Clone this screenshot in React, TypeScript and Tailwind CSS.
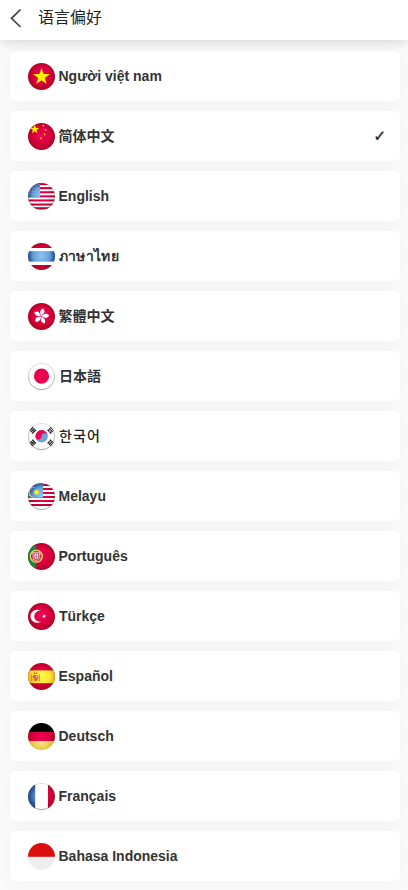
import type { ReactNode } from "react";

const STAR = "0,-10 2.35,-3.24 9.51,-3.09 3.8,1.24 5.88,8.09 0,4 -5.88,8.09 -3.8,1.24 -9.51,-3.09 -2.35,-3.24";

function Star({ x, y, s, fill = "#ffe100", r = 0 }: { x: number; y: number; s: number; fill?: string; r?: number }) {
  return <polygon points={STAR} fill={fill} transform={`translate(${x} ${y}) rotate(${r}) scale(${s / 10})`} />;
}

function Red() {
  return <rect width="27" height="27" fill="url(#red)" />;
}

function Stripes({ ys, h }: { ys: number[]; h: number }) {
  return (
    <>
      <rect width="27" height="27" fill="#fff" />
      {ys.map((y) => (
        <rect key={y} y={y} width="27" height={h} fill="url(#red)" />
      ))}
    </>
  );
}

const petals = [0, 72, 144, 216, 288];

const flags: Record<string, ReactNode> = {
  vn: (
    <>
      <Red />
      <Star x={13.5} y={13.8} s={8.9} fill="#fff000" />
    </>
  ),
  cn: (
    <>
      <Red />
      <Star x={6.7} y={6.4} s={4.8} fill="#fff000" />
      <Star x={15.4} y={2.7} s={1.4} r={20} />
      <Star x={17.7} y={6.9} s={1.4} />
      <Star x={16.6} y={11.4} s={1.4} r={20} />
      <Star x={12.9} y={15.3} s={1.6} />
    </>
  ),
  us: (
    <>
      <Stripes ys={[0, 4.1, 8.2, 12.3, 16.4, 20.5, 24.2]} h={2.1} />
      <rect width="12" height="14.2" fill="url(#blue)" />
      {[2, 5, 8, 11].map((y) =>
        [2, 5, 8, 11].map((x) => <circle key={`${x}-${y}`} cx={x - (y % 2)} cy={y} r=".65" fill="#d1e0f3" opacity=".55" />),
      )}
    </>
  ),
  th: (
    <>
      <rect width="27" height="27" fill="#fff" />
      <rect width="27" height="5" fill="url(#red)" />
      <rect y="8.2" width="27" height="10.4" fill="url(#blue)" />
      <rect y="22" width="27" height="5" fill="url(#red)" />
    </>
  ),
  hk: (
    <>
      <Red />
      <g transform="translate(13.3 13.2) rotate(12)">
        {petals.map((r) => (
          <path
            key={r}
            transform={`rotate(${r})`}
            d="M0 -.3C-2.4 -2.6 -2.9 -6.6 .6 -8.2C.2 -6.8 2.5 -6.2 2.3 -4.6C2.1 -3 .6 -2.4 0 -.3Z"
            fill="#fff"
          />
        ))}
      </g>
    </>
  ),
  jp: (
    <>
      <rect width="27" height="27" fill="#fff" />
      <circle cx="13.5" cy="13.2" r="7.6" fill="#ec0050" />
    </>
  ),
  kr: (
    <>
      <rect width="27" height="27" fill="#fff" />
      <g transform="translate(13.6 13.3)">
        <circle r="6.2" fill="#6aa3dc" />
        <path d="M-6.2 0A6.2 6.2 0 0 1 6.2 0A3.1 3.1 0 0 0 0 0A3.1 3.1 0 0 1 -6.2 0Z" fill="#f00057" />
      </g>
      {[
        [4.7, 7.3, -45],
        [22.8, 7.3, 45],
        [4.7, 20, 45],
        [22.8, 20, -45],
      ].map(([x, y, r]) => (
        <g key={`${x}-${y}`} transform={`translate(${x} ${y}) rotate(${r})`} stroke="#202020" strokeWidth="1.35">
          <path d="M-2.6 -1.9H2.6M-2.6 0H2.6M-2.6 1.9H2.6" />
          <path d="M0 -2.5V2.5" stroke={x > 20 ? "#fff" : "#202020"} strokeWidth=".5" />
        </g>
      ))}
    </>
  ),
  my: (
    <>
      <Stripes ys={[1, 5, 9, 13, 17, 21]} h={2} />
      <rect width="15" height="14.8" fill="url(#blue)" />
      <path d="M7.4 4.4A5.3 5.3 0 1 0 7.4 14.2A4.95 4.95 0 1 1 7.4 4.4Z" fill="#d9d640" />
      <circle cx="8.6" cy="9.2" r="2.2" fill="#fff02b" />
      <circle cx="8.6" cy="9.2" r="2.5" fill="none" stroke="#e8e238" strokeWidth=".8" strokeDasharray=".7 .6" />
    </>
  ),
  pt: (
    <>
      <Red />
      <rect width="8.2" height="27" fill="#168440" />
      <circle cx="8.3" cy="13.2" r="6" fill="#cc2638" stroke="#ded463" strokeWidth="1.3" />
      <path d="M3 10Q9 10 13.5 16M3.5 17Q9 17 13 10" stroke="#ded463" strokeWidth=".8" fill="none" />
      <path d="M5 9.4H11.6V14Q11.6 17 8.3 18Q5 17 5 14Z" fill="#e3425a" stroke="#f3dfd9" strokeWidth=".7" />
      <path d="M6.5 10.8H10.1V14Q10 15.5 8.3 16Q6.5 15.5 6.5 14Z" fill="#fff" />
      <path d="M8.3 11.2V15.5M6.9 13.2H9.8" stroke="#526eac" strokeWidth=".8" />
    </>
  ),
  tr: (
    <>
      <Red />
      <path d="M13.3 8.2A6.6 6.6 0 1 0 13.3 18.3A5.35 5.35 0 1 1 13.3 8.2Z" fill="#fff" />
      <Star x={16.1} y={13.2} s={2.3} fill="#fff" r={-18} />
    </>
  ),
  es: (
    <>
      <Red />
      <rect y="7.4" width="27" height="12.8" fill="url(#yellow)" />
      <path d="M3.6 11.5V18M11.3 11.5V18" stroke="#bc8b65" strokeWidth="1.1" />
      <path d="M2.5 14H12.4M2.7 17.7H4.7M10.3 17.7H12.3" stroke="#e37c48" strokeWidth=".7" />
      <path d="M5.3 12H9.8V15.8Q9.7 17.8 7.5 18.2Q5.4 17.8 5.3 15.8Z" fill="#d94b4e" />
      <path d="M5.5 10.8L6 9.3L7.5 10L9 9.3L9.6 10.8Z" fill="#d95643" />
      <rect x="7.7" y="12.5" width="1.7" height="2" fill="#e6d2cf" />
      <rect x="5.7" y="15" width="1.7" height="1.6" fill="#edb351" />
    </>
  ),
  de: (
    <>
      <rect width="27" height="9.2" fill="#000" />
      <rect y="9" width="27" height="9.1" fill="url(#red)" />
      <rect y="18" width="27" height="9" fill="url(#gold)" />
    </>
  ),
  fr: (
    <>
      <rect width="27" height="27" fill="#fff" />
      <rect width="7.2" height="27" fill="url(#navy)" />
      <rect x="20" width="7" height="27" fill="url(#red)" />
    </>
  ),
  id: (
    <>
      <rect width="28" height="14" fill="#dc0f0f" />
      <rect y="13.8" width="28" height="13.2" fill="#eee" />
    </>
  ),
};

const paleRims = ["jp", "kr", "my", "fr", "us"];

function FlagDefs() {
  return (
    <svg className="absolute size-0" aria-hidden="true">
      <defs>
        <radialGradient id="red" gradientUnits="userSpaceOnUse" cx="13.5" cy="12.5" r="14.5">
          <stop offset="0" stopColor="#f2005a" />
          <stop offset=".5" stopColor="#df0043" />
          <stop offset="1" stopColor="#ad0020" />
        </radialGradient>
        <radialGradient id="blue" gradientUnits="userSpaceOnUse" cx="13.5" cy="13" r="14">
          <stop offset="0" stopColor="#8cc8f0" />
          <stop offset=".6" stopColor="#659fd5" />
          <stop offset="1" stopColor="#183e8b" />
        </radialGradient>
        <radialGradient id="navy" gradientUnits="userSpaceOnUse" cx="13.5" cy="13" r="14">
          <stop offset="0" stopColor="#689bd1" />
          <stop offset=".5" stopColor="#5487c4" />
          <stop offset="1" stopColor="#17377f" />
        </radialGradient>
        <radialGradient id="yellow" gradientUnits="userSpaceOnUse" cx="13.5" cy="13" r="14">
          <stop offset="0" stopColor="#fff84a" />
          <stop offset=".6" stopColor="#fce632" />
          <stop offset="1" stopColor="#e2aa1f" />
        </radialGradient>
        <radialGradient id="gold" gradientUnits="userSpaceOnUse" cx="13.5" cy="17" r="13">
          <stop offset="0" stopColor="#fbe99a" />
          <stop offset=".65" stopColor="#edcf50" />
          <stop offset="1" stopColor="#d7a928" />
        </radialGradient>
        <linearGradient id="rim" x2="0" y2="1">
          <stop offset="0" stopColor="#777" stopOpacity=".25" />
          <stop offset="1" stopColor="#555" stopOpacity=".6" />
        </linearGradient>
        <clipPath id="disc">
          <circle cx="13.5" cy="13.5" r="13.5" />
        </clipPath>
      </defs>
    </svg>
  );
}

function Flag({ code }: { code: string }) {
  return (
    <svg viewBox="0 0 27 27" className="size-[27px] shrink-0 overflow-visible">
      <g clipPath="url(#disc)">{flags[code]}</g>
      {paleRims.includes(code) && <circle cx="13.5" cy="13.5" r="13.2" fill="none" stroke="url(#rim)" strokeWidth=".9" />}
    </svg>
  );
}

const languages = [
  { code: "vn", name: "Người việt nam" },
  { code: "cn", name: "简体中文", selected: true },
  { code: "us", name: "English" },
  { code: "th", name: "ภาษาไทย", style: "font-semibold tracking-[0.4px]" },
  { code: "hk", name: "繁體中文" },
  { code: "jp", name: "日本語", style: "pl-[0.5px] font-bold" },
  { code: "kr", name: "한국어", style: "pl-[0.5px] font-medium tracking-[1.1px] text-[#222]" },
  { code: "my", name: "Melayu" },
  { code: "pt", name: "Português" },
  { code: "tr", name: "Türkçe", style: "pl-[0.5px] font-bold" },
  { code: "es", name: "Español" },
  { code: "de", name: "Deutsch" },
  { code: "fr", name: "Français" },
  { code: "id", name: "Bahasa Indonesia" },
];

export default function App() {
  return (
    <div className="h-[890px] overflow-hidden bg-[#fafafa] font-['Liberation_Sans','Noto_Sans_CJK_SC',sans-serif] text-[#333]">
      <FlagDefs />
      <header className="relative flex h-10 items-center bg-white pl-[10px] shadow-[0_0_12px_rgba(0,0,0,0.2)]">
        <svg viewBox="0 0 12 20" className="mt-[-4px] h-5 w-3" fill="none" stroke="#444" strokeWidth="1.7">
          <path d="M10.5 1.5L1.5 10.3L10.5 19" />
        </svg>
        <h1 className="-mt-[5px] ml-4 text-base leading-6 text-[#222]">语言偏好</h1>
      </header>
      <main className="flex flex-col gap-[10px] pt-[11px] pr-2 pl-[10px]">
        {languages.map(({ code, name, selected, style }) => (
          <button
            key={code}
            className="flex h-[50px] items-center rounded-[5px] bg-white pr-[14px] pl-[18px] text-left shadow-[0_0_20px_rgba(0,0,0,0.035)]"
          >
            <Flag code={code} />
            <span className={`ml-[3.5px] text-sm leading-5 ${style ?? "font-bold"}`}>{name}</span>
            {selected && (
              <span className="ml-auto font-['DejaVu_Sans'] text-[15px] leading-5 font-bold text-[#222] [-webkit-text-stroke:0.4px_#222]">
                ✓
              </span>
            )}
          </button>
        ))}
      </main>
    </div>
  );
}
